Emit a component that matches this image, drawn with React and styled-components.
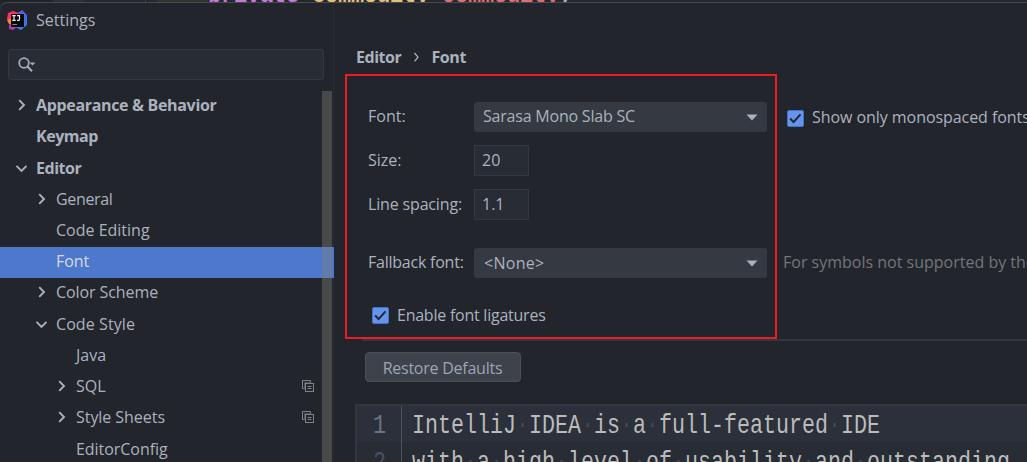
import React from "react";
import styled, { createGlobalStyle } from "styled-components";

const Global = createGlobalStyle`
  * { box-sizing: border-box; }
  body { margin: 0; background: #22252c; overflow: hidden; }
`;

const Screen = styled.div`
  width: 1027px;
  height: 462px;
  overflow: hidden;
  background: #23272e;
  color: #abb2bf;
  font: 16px/20px "Open Sans", "Noto Sans", sans-serif;
  white-space: nowrap;
`;

const CodeStrip = styled.div`
  height: 2px;
  overflow: hidden;
  display: flex;
  background: #23272e;
`;
const StripGutter = styled.div`
  width: 146px;
  background: linear-gradient(90deg, #1f2227 53px, #2b2f39 53px, #2b2f39 84px, #23272e 84px);
  border-right: 1px solid #40454f;
`;
const StripMark = styled.div`
  width: 51px;
  margin-left: 11px;
  background: #323331;
`;
const StripCode = styled.div`
  font: bold 22px/20px "Liberation Mono", monospace;
  letter-spacing: -0.2px;
  margin-top: -13px;
  white-space: pre;
`;
const Token = styled.span`
  color: ${(p) => p.$color};
`;

const Dialog = styled.div`
  height: 460px;
  border-top: 1px solid #484b50;
  border-top-left-radius: 8px;
  background: #22252c;
  display: flex;
  overflow: hidden;
`;

const Sidebar = styled.aside`
  width: 334px;
  flex: none;
  display: flex;
  flex-direction: column;
  border-right: 1px solid #282b32;
`;
const TitleBar = styled.header`
  display: flex;
  flex: none;
  align-items: center;
  height: 34px;
  padding-left: 7px;
  gap: 8px;
`;
const SearchBox = styled.div`
  width: 316px;
  height: 31px;
  flex: none;
  margin: 12px 0 11px 8px;
  border: 1px solid #333841;
  border-radius: 3px;
  background: #282c34;
  display: flex;
  align-items: center;
  padding-left: 9px;
`;
const TreePane = styled.div`
  display: flex;
  flex: none;
  position: relative;
  margin-right: -1px;
`;
const Tree = styled.div`
  flex: 1;
`;
const Text = styled.span`
  letter-spacing: ${(p) => p.$track || 0}px;
`;
const TreeRow = styled.div`
  height: 31.22px;
  display: flex;
  align-items: center;
  padding: 0 20px 3px ${(p) => 15 + p.$depth * 20}px;
  background: ${(p) => (p.$selected ? "#4d78cc" : "none")};
  color: ${(p) => (p.$selected ? "#d7dae0" : "#abb2bf")};
  font-weight: ${(p) => (p.$bold ? 700 : 400)};
`;
const Twisty = styled.span`
  width: 21px;
  display: flex;
  align-items: center;
`;
const RowLabel = styled(Text)`
  flex: 1;
`;
const Scrollbar = styled.div`
  position: absolute;
  right: 2px;
  top: 0;
  width: 10px;
  height: 100%;
  background: rgba(128, 128, 122, 0.4);
`;

const Main = styled.main`
  flex: 1;
  min-width: 0;
  padding-left: 21px;
  display: flex;
  flex-direction: column;
`;
const Breadcrumb = styled.nav`
  margin: 44px 0 0 1px;
  display: flex;
  flex: none;
  align-items: center;
  height: 20px;
  font-weight: 700;
`;
const Form = styled.div`
  margin: 35px 0 0 13px;
  flex: none;
  display: grid;
  grid-template-columns: 106px 293px auto;
  grid-template-rows: 43px 44px 59px 53px 39px;
  align-items: start;
`;
const Label = styled.label`
  line-height: ${(p) => p.$line}px;
  letter-spacing: ${(p) => p.$track || 0}px;
`;
const Combo = styled.div`
  height: 30px;
  border-radius: 3px;
  background: #353941;
  display: flex;
  align-items: center;
  justify-content: space-between;
  padding: 0 9px 0 ${(p) => p.$inset}px;
`;
const ComboText = styled(Text)`
  padding-bottom: ${(p) => p.$lift}px;
`;
const NumberField = styled.div`
  width: 55px;
  height: 31px;
  border: 1px solid #333841;
  background: #282c34;
  line-height: 28px;
  padding-left: 7px;
`;
const Check = styled.div`
  display: flex;
  align-items: center;
  gap: 8px;
  height: ${(p) => p.$height}px;
  margin-left: ${(p) => p.$indent}px;
`;
const CheckText = styled(Text)`
  padding-bottom: ${(p) => p.$lift}px;
`;
const Hint = styled.div`
  line-height: 29px;
  margin-left: 16px;
  color: #73767a;
`;
const CheckRow = styled.div`
  grid-column: 1 / 4;
`;
const Divider = styled.div`
  margin: -1px 0 0 7px;
  height: 2px;
  background: #32363e;
  flex: none;
`;
const Button = styled.button`
  margin: 11px 0 0 10px;
  width: 156px;
  height: 30px;
  flex: none;
  border: 1px solid #4a4f58;
  border-radius: 4px;
  background: #3d424b;
  color: #9da5b4;
  font: inherit;
  letter-spacing: -0.24px;
  padding: 1px 1px 0 0;
`;
const Editor = styled.div`
  margin-top: 22px;
  height: 80px;
  flex: none;
  border: 2px solid #32363e;
  border-right: 0;
  background: #282c34;
`;
const CodeLine = styled.div`
  height: 36px;
  display: flex;
  background: ${(p) => (p.$current ? "#2c303a" : "#282c34")};
`;
const mono = `font: 28px/36px "Liberation Mono", monospace;`;
const LineNumber = styled.div`
  ${mono}
  width: 45px;
  border-right: 1px solid #4b5060;
  color: ${(p) => (p.$current ? "#6b7385" : "#495162")};
  padding: ${(p) => (p.$current ? 2 : 3)}px 0 0 16px;
  flex: none;
`;
const Squeezed = styled.span`
  ${mono}
  display: inline-block;
  transform: scaleX(0.7737);
  transform-origin: 0 0;
  white-space: pre;
`;
const Code = styled.div`
  padding: ${(p) => (p.$current ? 2 : 3)}px 0 0 10px;
  color: #bbbbbb;
`;
const Dot = styled.span`
  color: #434856;
`;
const Highlight = styled.div`
  position: absolute;
  left: 345px;
  top: 74px;
  width: 432px;
  height: 265px;
  border: 2px solid #ed1c24;
`;

const Logo = () => (
  <svg width="21" height="20" viewBox="0 0 21 20">
    <defs>
      <linearGradient id="pink" x1="0" y1="0" x2="1" y2="1">
        <stop offset="0" stopColor="#fe315d" />
        <stop offset="1" stopColor="#f72a8c" />
      </linearGradient>
      <linearGradient id="blue" x1="0" y1="0" x2="0" y2="1">
        <stop offset="0" stopColor="#6a5be0" />
        <stop offset="0.3" stopColor="#3d6de8" />
        <stop offset="1" stopColor="#3f7bea" />
      </linearGradient>
    </defs>
    <path d="M1 3 6 1 12 3 12 8 5 14 0 9Z" fill="url(#pink)" />
    <path d="M0 10 5 8 5 15 2 14Z" fill="#f98a1c" />
    <path d="M2 15 6 12 10 17 6 20 2 19Z" fill="#b03bb8" />
    <path d="M11 3 15 0 20 5 20 15 14 20 8 17Z" fill="url(#blue)" />
    <rect x="4" y="4" width="13" height="13" fill="#080808" />
    <path d="M5.3 5.6H8.7M7 5.6V10.4M5.3 10.4H8.7M10 5.6H12.5V9.4Q12.5 10.4 11.3 10.4H10" stroke="#eee" strokeWidth="1.2" fill="none" />
    <path d="M5.3 14.5H10" stroke="#888" strokeWidth="1.1" />
  </svg>
);
const SearchIcon = () => (
  <svg width="18" height="16" viewBox="0 0 18 16" fill="none" stroke="#a5acb9">
    <circle cx="6" cy="6" r="4.8" strokeWidth="1.8" />
    <path d="M9.5 9.5 14 14.3" strokeWidth="2" />
    <path d="M11.5 5.5h6l-3 3z" fill="#a5acb9" stroke="none" />
  </svg>
);
const Chevron = ({ open }) => (
  <svg width="13" height="12" viewBox="0 0 13 12" fill="none" stroke="#abb2bf" strokeWidth="1.9">
    {open ? <path d="M1.5 3.8 6.5 8.8 11.5 3.8" /> : <path d="M4.2 1.2 9 6 4.2 10.8" />}
  </svg>
);
const CopyIcon = () => (
  <svg width="12" height="12" viewBox="0 0 12 12" fill="none" stroke="#7d8287">
    <path d="M2.5 8.5H.5V.5H8.5V2.5" />
    <path d="M2.5 9.5V2.5H9.5" stroke="#50555a" />
    <rect x="3.5" y="3.5" width="8" height="8" />
    <path d="M5.5 6.5h4M5.5 8.5h4" />
  </svg>
);
const Arrow = () => (
  <svg width="12" height="7" viewBox="0 0 12 7">
    <path d="M.5.5h11L6 6.5z" fill="#abb2bf" />
  </svg>
);
const CheckIcon = () => (
  <svg width="17" height="17" viewBox="0 0 17 17">
    <rect x=".5" y=".5" width="16" height="16" rx="1.5" fill="#6494ed" stroke="#4473c4" />
    <path d="M3.2 8.5 6.6 12.1 13.5 4.3" fill="none" stroke="#22252c" strokeWidth="2" />
  </svg>
);
const Separator = () => (
  <svg width="30" height="12" viewBox="0 0 30 12" fill="none" stroke="#abb2bf" strokeWidth="1.3">
    <path d="M13.5 2 17 6.2 13.5 10.4" />
  </svg>
);

const rows = [
  { label: "Appearance & Behavior", depth: 0, bold: true, open: false, track: -0.33 },
  { label: "Keymap", depth: 0, bold: true, track: -0.45 },
  { label: "Editor", depth: 0, bold: true, open: true, track: -0.45 },
  { label: "General", depth: 1, open: false, track: -0.35 },
  { label: "Code Editing", depth: 1 },
  { label: "Font", depth: 1, selected: true, track: -0.1 },
  { label: "Color Scheme", depth: 1, open: false, track: -0.08 },
  { label: "Code Style", depth: 1, open: true, track: 0.08 },
  { label: "Java", depth: 2 },
  { label: "SQL", depth: 2, open: false, copy: true },
  { label: "Style Sheets", depth: 2, open: false, copy: true, track: -0.05 },
  { label: "EditorConfig", depth: 2, track: -0.05 },
];
const lines = ["IntelliJ IDEA is a full-featured IDE", "with a high level of usability and outstanding"];

const Dotted = ({ text }) =>
  text.split(" ").map((word, i) => (
    <React.Fragment key={i}>
      {i > 0 && <Dot>·</Dot>}
      {word}
    </React.Fragment>
  ));

export default function App() {
  return (
    <Screen>
      <Global />
      <CodeStrip>
        <StripGutter />
        <StripMark />
        <StripCode>
          <Token $color="#c678dd">private </Token>
          <Token $color="#e5c07b">Commodity </Token>
          <Token $color="#e06c75">commodity</Token>
          <Token $color="#abb2bf">;</Token>
        </StripCode>
      </CodeStrip>
      <Dialog>
        <Sidebar>
          <TitleBar>
            <Logo />
            <span>Settings</span>
          </TitleBar>
          <SearchBox>
            <SearchIcon />
          </SearchBox>
          <TreePane>
            <Tree>
              {rows.map((r) => (
                <TreeRow key={r.label} $depth={r.depth} $bold={r.bold} $selected={r.selected}>
                  <Twisty>{r.open !== undefined && <Chevron open={r.open} />}</Twisty>
                  <RowLabel $track={r.track}>{r.label}</RowLabel>
                  {r.copy && <CopyIcon />}
                </TreeRow>
              ))}
            </Tree>
            <Scrollbar />
          </TreePane>
        </Sidebar>
        <Main>
          <Breadcrumb>
            <Text $track={-0.45}>Editor</Text>
            <Separator />
            <Text $track={-0.4}>Font</Text>
          </Breadcrumb>
          <Form>
            <Label $line={28}>Font:</Label>
            <Combo $inset={9}>
              <ComboText $track={-0.21} $lift={2}>Sarasa Mono Slab SC</ComboText>
              <Arrow />
            </Combo>
            <Check $indent={20} $height={32}>
              <CheckIcon />
              <CheckText $track={-0.06} $lift={2}>Show only monospaced fonts</CheckText>
            </Check>
            <Label $line={30}>Size:</Label>
            <NumberField>20</NumberField>
            <span />
            <Label $line={30} $track={-0.16}>Line spacing:</Label>
            <NumberField>1.1</NumberField>
            <span />
            <Label $line={28} $track={-0.23}>Fallback font:</Label>
            <Combo $inset={10}>
              <ComboText $track={0.3} $lift={1}>&lt;None&gt;</ComboText>
              <Arrow />
            </Combo>
            <Hint>For symbols not supported by the main font</Hint>
            <CheckRow>
              <Check $indent={4} $height={29}>
                <CheckIcon />
                <CheckText $track={-0.24} $lift={1}>Enable font ligatures</CheckText>
              </Check>
            </CheckRow>
          </Form>
          <Divider />
          <Button>Restore Defaults</Button>
          <Editor>
            {lines.map((text, i) => (
              <CodeLine key={text} $current={i === 0}>
                <LineNumber $current={i === 0}>
                  <Squeezed>{i + 1}</Squeezed>
                </LineNumber>
                <Code $current={i === 0}>
                  <Squeezed>
                    <Dotted text={text} />
                  </Squeezed>
                </Code>
              </CodeLine>
            ))}
          </Editor>
        </Main>
      </Dialog>
      <Highlight />
    </Screen>
  );
}
